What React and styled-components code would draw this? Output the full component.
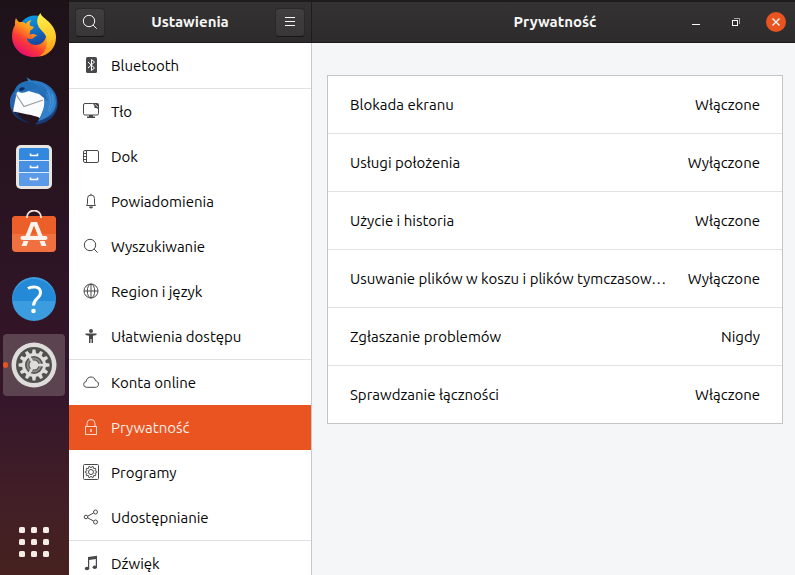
import React from "react";
import styled, { createGlobalStyle } from "styled-components";

const Global = createGlobalStyle`
  *, *::before, *::after { box-sizing: border-box; }
  body { margin: 0; background: #f4f6f7; }
  body, button { font-family: Ubuntu, "Noto Sans", "Open Sans", sans-serif; font-size: 15px; line-height: 20px; }
  button { border: 0; padding: 0; margin: 0; background: none; color: inherit; }
  svg { display: block; }
`;

const Desktop = styled.div`
  display: flex;
  height: 100vh;
  overflow: hidden;
  color: #050505;
`;

const Dock = styled.nav`
  flex: 0 0 69px;
  display: flex;
  flex-direction: column;
  justify-content: space-between;
  padding: 4px 4px 2px 3px;
  background: linear-gradient(#1e1219 0%, #2b1423 40%, #36162a 70%, #421f26 88%, #46211f 100%);
`;

const Launchers = styled.div`
  display: flex;
  flex-direction: column;
  gap: 4px;
`;

const DockButton = styled.button`
  position: relative;
  display: grid;
  place-items: center;
  width: 62px;
  height: 62px;
  border-radius: 4px;
  background: ${(p) => (p.$active ? "#5b4350" : "transparent")};
`;

const RunningDot = styled.span`
  position: absolute;
  left: 0;
  top: 28px;
  width: 5px;
  height: 6px;
  border-radius: 50%;
  background: #e95420;
`;

const Window = styled.div`
  flex: 1;
  min-width: 0;
  display: flex;
  flex-direction: column;
  border-top: 2px solid #1e1c1c;
`;

const HeaderBar = styled.header`
  flex: 0 0 41px;
  display: flex;
  color: #f7f7f7;
  background: linear-gradient(#343233, #2d2b2b);
  border-bottom: 1px solid #1c1a1a;
`;

const SideHeader = styled.div`
  flex: 0 0 243px;
  display: flex;
  align-items: center;
  justify-content: space-between;
  padding: 0 6px;
  border-right: 1px solid #1f1d1d;
`;

const MainHeader = styled.div`
  flex: 1;
  display: grid;
  grid-template-columns: 1fr auto 1fr;
  align-items: center;
  padding: 0 9px 0 12px;
`;

const Title = styled.h1`
  margin: 0;
  font-size: 15px;
  line-height: 20px;
  font-weight: 700;
`;

const MainTitle = styled(Title)`
  grid-column: 2;
`;

const ToolButton = styled.button`
  display: grid;
  place-items: center;
  width: 30px;
  height: 29px;
  border-radius: 4px;
  border: 1px solid #2a2828;
  border-bottom-color: #171616;
  background: linear-gradient(#403e3e, #393737);
`;

const WindowControls = styled.div`
  display: flex;
  justify-content: flex-end;
  gap: 20px;
`;

const ControlButton = styled.button`
  display: grid;
  place-items: center;
  width: 20px;
  height: 20px;
  border-radius: 50%;
  background: ${(p) => (p.$close ? "#e95420" : "transparent")};
`;

const Body = styled.div`
  flex: 1;
  min-height: 0;
  display: flex;
`;

const Sidebar = styled.nav`
  flex: 0 0 243px;
  overflow: hidden;
  background: #fff;
  border-right: 1px solid #c6c8ca;
`;

const NavGroup = styled.div`
  & + & { border-top: 1px solid #dfe0e1; }
`;

const NavItem = styled.button`
  display: flex;
  align-items: center;
  gap: 12px;
  width: 100%;
  height: 45px;
  padding-left: 14px;
  text-align: left;
  color: ${(p) => (p.$selected ? "#fbeee8" : "#050505")};
  background: ${(p) => (p.$selected ? "#e95420" : "transparent")};
  svg {
    margin-bottom: 2px;
    color: ${(p) => (p.$selected ? "#fbd9cb" : "#48484a")};
  }
`;

const Content = styled.main`
  flex: 1;
  min-width: 0;
  padding: 32px 12px 0 15px;
  background: #f4f6f7;
`;

const Card = styled.div`
  background: #fff;
  border: 1px solid #c3c5c5;
`;

const SettingRow = styled.button`
  display: flex;
  align-items: center;
  justify-content: space-between;
  gap: 18px;
  width: 100%;
  height: 57px;
  padding: 0 22px;
  text-align: left;
  & + & {
    height: 58px;
    border-top: 1px solid #e1e2e2;
  }
`;

const Label = styled.span`
  min-width: 0;
  overflow: hidden;
  white-space: nowrap;
  text-overflow: ellipsis;
`;

const Value = styled.span`
  flex: none;
`;

const gearPath = (cx, cy, outer, inner, teeth) => {
  const pts = [];
  const step = (Math.PI * 2) / teeth;
  for (let i = 0; i < teeth; i++) {
    [[-0.32, inner], [-0.18, outer], [0.18, outer], [0.32, inner]].forEach(([o, r]) => {
      const a = (i + o) * step;
      pts.push(`${(cx + r * Math.cos(a)).toFixed(2)} ${(cy + r * Math.sin(a)).toFixed(2)}`);
    });
  }
  return `M${pts.join("L")}Z`;
};

const Firefox = () => (
  <svg width="46" height="46" viewBox="0 0 46 46" aria-hidden="true">
    <defs>
      <linearGradient id="ffBody" x1="0.8" y1="0.1" x2="0.2" y2="0.9">
        <stop offset="0" stopColor="#ffdf2e" />
        <stop offset="0.4" stopColor="#ff9a1c" />
        <stop offset="0.7" stopColor="#fb3a36" />
        <stop offset="1" stopColor="#e7106f" />
      </linearGradient>
      <linearGradient id="ffTail" x1="0.4" y1="0" x2="0.5" y2="1">
        <stop offset="0" stopColor="#fff04a" />
        <stop offset="0.6" stopColor="#ffc928" />
        <stop offset="1" stopColor="#ff8a1c" />
      </linearGradient>
      <linearGradient id="ffGlobe" x1="0.3" y1="0" x2="0.6" y2="1">
        <stop offset="0" stopColor="#0a9be6" />
        <stop offset="1" stopColor="#1c3a94" />
      </linearGradient>
    </defs>
    <circle cx="24" cy="20" r="16.5" fill="url(#ffGlobe)" />
    <path d="M5 6c.7 2 2 3.200 3.500 4.200 2.600-.5 5 .1 6.500 1.500 1.200-2 3.300-3.400 5.500-3.700-1.800 2-2.400 4.200-1.400 5.800l3.400 1c.5 1.900-2.200 2.800-3.500 4.400-.2 1.800 0 2.500-.5 3.800 3-1.600 5.500-.9 7.800.8-2 .2-3 1.700-4.500 2.700-2.400 1.200-5 .4-6.300-.7 1 4.600 4.500 7 9 7.200 6.500.2 11-5 11-12 0-2-.5-3.800-1.500-5.500 5 2 8 7 10.300 10C43.400 37.500 33.500 45 22.700 45 10 45 1 35.500 1 24c0-4.600 1.300-8 3-11C3.800 10.600 4.100 8 5 6Z" fill="url(#ffBody)" />
    <path d="M29.500 1c.7 3.200 4.500 5.400 8 8.600 4.600 4.300 7.500 9.500 7.500 15.800 0 10.400-7.200 18-17.500 19.200 7.500-4.300 9.400-11 8.200-17.700-1.200-6.600-6.600-8-8.700-13.600C25.400 8.800 26.500 4.200 29.500 1Z" fill="url(#ffTail)" />
  </svg>
);

const Thunderbird = () => (
  <svg width="50" height="48" viewBox="0 0 50 48" aria-hidden="true">
    <defs>
      <linearGradient id="tbBlue" x1="0.2" y1="0" x2="0.6" y2="1">
        <stop offset="0" stopColor="#2c84cc" />
        <stop offset="0.55" stopColor="#2467b2" />
        <stop offset="1" stopColor="#19366e" />
      </linearGradient>
    </defs>
    <path d="M17 .5c2 .5 4 1.500 5.500 3C36 3 48 12 48.500 25 49 38 39 47.500 26 47.500c6-5 8-11 8-18L8 12C10 7 14 4.500 19 4c-.2-1.500-.8-2.500-2-3.500Z" fill="url(#tbBlue)" />
    <path d="M8 12C3 15 .8 20 1 26c.2 8 5 14 11 17-3-3-4-6-3.500-9Z" fill="#2563ae" />
    <path d="M7 33c2 6 7 10 14 13-8 0-16-7-18-14Z" fill="#142b5a" />
    <path d="m8 14 8-1 14 4 5 4 1.500 6L31 41c-3-2-6-1.500-9-3-6-.5-12-3-18-3.500Z" fill="#fafbfc" />
    <path d="m6.500 16.500 8.500 13L34 23" fill="none" stroke="#9a9da4" strokeWidth="1.200" />
    <path d="M5 20C4 11 10 5 17 4.500c6-.3 12 3 14 8.500-4-1.500-8-1.500-11 .5-3 2-7 3.500-11 1-1.500 1-3 3-4 5.500Z" fill="#226fb9" />
    <path d="M10 12c2-2 4-2.500 6-1-1 2-2.500 3-5 3Z" fill="#102a58" />
    <path d="M26 5c8 2 13 7 14 13l-4-3 3 9-4-3c1 8-1 15-6 23 12-3 18-10 18-18C47 15 38 7 26 5Z" fill="#3080cc" />
    <path d="M38 14c4 5 5 12 1 19M43 17c2 6 1 12-3 18" fill="none" stroke="#4c98da" strokeWidth="1" />
  </svg>
);

const Files = () => (
  <svg width="38" height="46" viewBox="0 0 38 46" aria-hidden="true">
    <rect x="1" y="1" width="36" height="44" rx="5" fill="#e9e6e1" />
    <rect x="4" y="4" width="30" height="38" rx="2" fill="#3287de" />
    <path d="M4 17h30v12H4Z" fill="#478fe3" />
    <path d="M4 29h30v11a2 2 0 0 1-2 2H6a2 2 0 0 1-2-2Z" fill="#5b99e9" />
    <path d="M4 16.500h30M4 28.500h30" stroke="#d8e9fb" />
    {[9.5, 21.5, 33.5].map((y) => (
      <path key={y} d={`M15.500 ${y}v2h7v-2`} fill="none" stroke="#fff" strokeWidth="1.600" />
    ))}
  </svg>
);

const Software = () => (
  <svg width="46" height="46" viewBox="0 0 46 46" aria-hidden="true">
    <rect x="1" y="6" width="44" height="36" rx="4" fill="#f1703f" />
    <path d="M1 24h44V10a4 4 0 0 0-4-4H5a4 4 0 0 0-4 4Z" fill="#ed5f28" />
    <path d="M16 8V7a7 6.500 0 0 1 14 0v1" fill="none" stroke="#f4e0d5" strokeWidth="1.800" />
    <path d="M20 12h6l6 15h-4.500L23 15.500 18.500 27H14Z" fill="#fff4ed" />
    <path d="M11.500 28h23" stroke="#fff4ed" strokeWidth="4" strokeLinecap="round" />
    <path d="M12.500 31h5l-2 5h-5ZM28.500 31h5l2 5h-5Z" fill="#fff4ed" />
  </svg>
);

const Help = () => (
  <svg width="46" height="46" viewBox="0 0 46 46" aria-hidden="true">
    <circle cx="23" cy="23" r="22" fill="#3b9ce0" />
    <path d="M1 25a22 22 0 1 1 44 0Z" fill="#2489d6" />
    <path d="M17 12.500c4-2.500 12.500-2.500 12.500 4 0 6-7 6-7 13" fill="none" stroke="#fff" strokeWidth="3" />
    <circle cx="22.500" cy="35" r="2.300" fill="#fff" />
  </svg>
);

const SettingsGear = () => (
  <svg width="46" height="46" viewBox="0 0 46 46" aria-hidden="true">
    <circle cx="23" cy="23" r="22.500" fill="#dedddb" />
    <circle cx="23" cy="23" r="18" fill="#50514f" />
    <path d={gearPath(23, 23, 15.5, 12, 12)} fill="#dedddb" />
    <circle cx="23" cy="23" r="9" fill="#50514f" />
    <circle cx="23" cy="23" r="6.500" fill="none" stroke="#898986" strokeWidth="2" />
    <path d="M23 23h10M23 23l-5-9M23 23l-5 9" stroke="#dedddb" strokeWidth="2.500" />
    <circle cx="23" cy="23" r="4.500" fill="#dedddb" />
  </svg>
);

const AppGrid = () => (
  <svg width="30" height="30" viewBox="0 0 30 30" aria-hidden="true" fill="#f5ece6">
    {[0, 12, 24].map((y) => [0, 12, 24].map((x) => <rect key={`${x}-${y}`} x={x} y={y} width="6" height="6" rx="1.500" />))}
  </svg>
);

const LineIcon = ({ children, size = 16 }) => (
  <svg width={size} height={size} viewBox="0 0 16 16" fill="none" stroke="currentColor" strokeWidth="1" aria-hidden="true">
    {children}
  </svg>
);

const SearchShape = () => (
  <>
    <circle cx="7" cy="7" r="5.700" />
    <path d="m11.100 11.100 3.600 3.600" />
  </>
);

const icons = {
  bluetooth: (
    <>
      <rect x="3" y="0" width="11" height="16" rx="1.500" fill="currentColor" stroke="none" />
      <path d="m5 5 6.500 6L8.500 13.500V2.500L11.500 5 5 11" stroke="#fff" />
    </>
  ),
  background: (
    <>
      <path d="M9.500.5H2A1.500 1.500 0 0 0 .5 2v8.500A1.500 1.500 0 0 0 2 12h12a1.500 1.500 0 0 0 1.500-1.500V6" />
      <path d="M9 0h5a2 2 0 0 1 2 2v5c-1-1.500-2-2-4.500-2C11.800 3 11 1.500 9 0Z" fill="currentColor" stroke="none" />
      <path d="M12 1.200 14.800 4" stroke="#ddd" />
      <path d="M6 12h4v1.500h2V15H4v-1.500h2Z" fill="currentColor" stroke="none" />
    </>
  ),
  dock: (
    <>
      <rect x="0.500" y="2.500" width="15" height="12" rx="1.500" />
      <path d="M3.500 2.500v12M.5 5.500h3M.5 8.500h3M.5 11.500h3" />
    </>
  ),
  bell: (
    <>
      <path d="M3.500 12.500h9c-1-1.200-1-2-1-3.500V5.500a3.500 3.500 0 0 0-7 0V9c0 1.500 0 2.300-1 3.500Z" />
      <path d="M8 .8V2" />
      <path d="M6 13.500h4a2 2 0 0 1-4 0Z" fill="currentColor" stroke="none" />
    </>
  ),
  search: <SearchShape />,
  globe: (
    <>
      <circle cx="8" cy="8" r="7" />
      <ellipse cx="8" cy="8" rx="3.700" ry="7" />
      <path d="M8 1v14M1 8h14" />
    </>
  ),
  access: (
    <g fill="currentColor" stroke="none">
      <circle cx="8" cy="3" r="2" />
      <path d="M2.500 5.500h11V7L10 7.700V15H8.500v-4h-1v4H6V7.700L2.500 7Z" />
    </g>
  ),
  cloud: <path d="M3.500 13.300A3 3 0 0 1 .6 10.500a3 3 0 0 1 2.600-3C3.500 4.700 5.400 3 8 3c2.300 0 3.900 1.200 4.400 3.700 2 .4 3.100 1.800 3.100 3.500 0 1.900-1.300 3.100-3 3.100Z" />,
  lock: (
    <>
      <rect x="2.500" y="7.500" width="11" height="8" />
      <path d="M4 7V4.500a4 4 0 0 1 8 0V7" />
      <path d="M8 10v3" strokeWidth="1.500" />
    </>
  ),
  apps: (
    <>
      <rect x="0.500" y="0.500" width="15" height="15" rx="1" />
      <path d={gearPath(8, 8, 5.7, 4.5, 10)} />
      <circle cx="8" cy="8" r="2.500" />
    </>
  ),
  share: (
    <>
      <circle cx="3" cy="8" r="1.800" />
      <circle cx="12.500" cy="3" r="2" />
      <circle cx="12.500" cy="13" r="2" />
      <path d="m5 7 5.500-3M5 9l5.500 3" />
    </>
  ),
  music: (
    <g fill="currentColor" stroke="none">
      <path d="M5 2 14 .8V12h-1.200V4L6.200 5v9H5Z" />
      <ellipse cx="4" cy="13.500" rx="2.200" ry="1.800" />
      <ellipse cx="11.800" cy="12.200" rx="2.200" ry="1.800" />
    </g>
  ),
};

const navGroups = [
  [["bluetooth", "Bluetooth"]],
  [
    ["background", "Tło"],
    ["dock", "Dok"],
    ["bell", "Powiadomienia"],
    ["search", "Wyszukiwanie"],
    ["globe", "Region i język"],
    ["access", "Ułatwienia dostępu"],
  ],
  [
    ["cloud", "Konta online"],
    ["lock", "Prywatność"],
    ["apps", "Programy"],
    ["share", "Udostępnianie"],
  ],
  [["music", "Dźwięk"]],
];

const settings = [
  ["Blokada ekranu", "Włączone"],
  ["Usługi położenia", "Wyłączone"],
  ["Użycie i historia", "Włączone"],
  ["Usuwanie plików w koszu i plików tymczasow…", "Wyłączone"],
  ["Zgłaszanie problemów", "Nigdy"],
  ["Sprawdzanie łączności", "Włączone"],
];

const launchers = [
  ["Firefox", Firefox],
  ["Thunderbird", Thunderbird],
  ["Pliki", Files],
  ["Ubuntu Software", Software],
  ["Pomoc", Help],
  ["Ustawienia", SettingsGear],
];

export default function App() {
  return (
    <Desktop>
      <Global />
      <Dock>
        <Launchers>
          {launchers.map(([name, Icon]) => (
            <DockButton key={name} aria-label={name} $active={name === "Ustawienia"}>
              {name === "Ustawienia" && <RunningDot />}
              <Icon />
            </DockButton>
          ))}
        </Launchers>
        <DockButton aria-label="Programy">
          <AppGrid />
        </DockButton>
      </Dock>
      <Window>
        <HeaderBar>
          <SideHeader>
            <ToolButton aria-label="Szukaj">
              <LineIcon><SearchShape /></LineIcon>
            </ToolButton>
            <Title>Ustawienia</Title>
            <ToolButton aria-label="Menu">
              <LineIcon><path d="M3 3.500h10M3 7.500h10M3 11.500h10" /></LineIcon>
            </ToolButton>
          </SideHeader>
          <MainHeader>
            <MainTitle as="h2">Prywatność</MainTitle>
            <WindowControls>
              <ControlButton aria-label="Minimalizuj">
                <LineIcon><path d="M4 10.500h8" /></LineIcon>
              </ControlButton>
              <ControlButton aria-label="Przywróć">
                <LineIcon>
                  <rect x="4.500" y="6.500" width="5" height="5" />
                  <path d="M6 4.500h5.500V10" opacity="0.600" />
                </LineIcon>
              </ControlButton>
              <ControlButton aria-label="Zamknij" $close>
                <LineIcon><path d="m4.500 4.500 7 7m0-7-7 7" strokeWidth="1.400" /></LineIcon>
              </ControlButton>
            </WindowControls>
          </MainHeader>
        </HeaderBar>
        <Body>
          <Sidebar aria-label="Ustawienia">
            {navGroups.map((group) => (
              <NavGroup key={group[0][0]}>
                {group.map(([icon, label]) => (
                  <NavItem key={icon} $selected={icon === "lock"} aria-current={icon === "lock" ? "page" : undefined}>
                    <LineIcon>{icons[icon]}</LineIcon>
                    {label}
                  </NavItem>
                ))}
              </NavGroup>
            ))}
          </Sidebar>
          <Content>
            <Card>
              {settings.map(([label, value]) => (
                <SettingRow key={label}>
                  <Label>{label}</Label>
                  <Value>{value}</Value>
                </SettingRow>
              ))}
            </Card>
          </Content>
        </Body>
      </Window>
    </Desktop>
  );
}
